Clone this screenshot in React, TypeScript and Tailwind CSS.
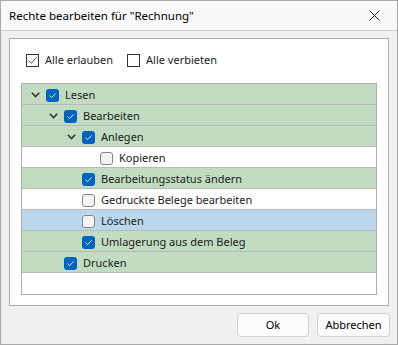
import React from 'react';

interface TreeRow {
  label: string;
  level: number;
  expanded?: boolean;
  checked: boolean;
  tone: 'green' | 'white' | 'blue';
}

const rows: TreeRow[] = [
  { label: 'Lesen', level: 0, expanded: true, checked: true, tone: 'green' },
  { label: 'Bearbeiten', level: 1, expanded: true, checked: true, tone: 'green' },
  { label: 'Anlegen', level: 2, expanded: true, checked: true, tone: 'green' },
  { label: 'Kopieren', level: 3, checked: false, tone: 'white' },
  { label: 'Bearbeitungsstatus ändern', level: 2, checked: true, tone: 'green' },
  { label: 'Gedruckte Belege bearbeiten', level: 2, checked: false, tone: 'white' },
  { label: 'Löschen', level: 2, checked: false, tone: 'blue' },
  { label: 'Umlagerung aus dem Beleg', level: 2, checked: true, tone: 'green' },
  { label: 'Drucken', level: 1, checked: true, tone: 'green' },
];

const toneClass = {
  green: 'bg-[#c1dcc1]',
  white: 'bg-white',
  blue: 'bg-[#bcd6eb]',
};

const Chevron = () => (
  <svg width="9" height="6" viewBox="0 0 9 6" className="ml-[3px]">
    <path d="M0.8 0.8 L4.5 4.6 L8.2 0.8" fill="none" stroke="#333" strokeWidth="1.5" />
  </svg>
);

const TreeCheck = ({ checked }: { checked: boolean }) =>
  checked ? (
    <span className="flex h-[13px] w-[13px] shrink-0 items-center justify-center rounded-[3px] bg-[#0063c0]">
      <svg width="9" height="7" viewBox="0 0 9 7">
        <path d="M1.5 3.6 L3.6 5.6 L7.6 1.4" fill="none" stroke="#fff" strokeWidth="0.9" />
      </svg>
    </span>
  ) : (
    <span className="h-[13px] w-[13px] shrink-0 rounded-[3px] border border-[#858585] bg-[#f4f4f4]" />
  );

const ClassicCheck = ({ checked }: { checked: boolean }) => (
  <span className="flex h-[13px] w-[13px] shrink-0 items-center justify-center border border-[#333] bg-white">
    {checked && (
      <svg width="11" height="11" viewBox="0 0 11 11">
        <path d="M1.5 5.5 L4.3 8.3 L9.6 2.2" fill="none" stroke="#444" strokeWidth="0.9" />
      </svg>
    )}
  </span>
);

export default function App() {
  return (
    <div
      className="flex h-[345px] w-[398px] flex-col border border-[#a9a9a9] bg-[#f0f0f0] text-[11px] text-[#1b1b1b]"
      style={{ fontFamily: '"Segoe UI", "Noto Sans", sans-serif' }}
    >
      {/* Title bar */}
      <div className="flex h-[30px] shrink-0 items-center justify-between border-b border-[#cfcfcf] bg-[#f9f9f9] pl-[8px] pr-[17px]">
        <span className="text-[11.5px] text-black">Rechte bearbeiten für "Rechnung"</span>
        <svg width="11" height="11" viewBox="0 0 11 11">
          <path d="M0.5 0.5 L10.5 10.5 M10.5 0.5 L0.5 10.5" stroke="#222" strokeWidth="1" />
        </svg>
      </div>

      {/* Content panel */}
      <div className="mx-[8px] mt-[7px] flex h-[268px] flex-col border border-[#adadad] bg-white px-[11px] pb-[10px] pt-[15px]">
        <div className="flex h-[13px] items-center pl-[5px]">
          <ClassicCheck checked />
          <span className="ml-[6px]">Alle erlauben</span>
          <span className="ml-[14px]">
            <ClassicCheck checked={false} />
          </span>
          <span className="ml-[6px]">Alle verbieten</span>
        </div>

        <div className="mt-[16px] h-[212px] border border-[#adadad] bg-white">
          {rows.map((row) => (
            <div
              key={row.label}
              className={`flex h-[21px] items-center border-b border-[#b9b9b9] pt-[2px] ${toneClass[row.tone]}`}
            >
              <div className="shrink-0" style={{ width: 6 + row.level * 18 }} />
              <div className="flex w-[18px] shrink-0 items-center">{row.expanded && <Chevron />}</div>
              <TreeCheck checked={row.checked} />
              <span className="ml-[6px] whitespace-nowrap">{row.label}</span>
            </div>
          ))}
        </div>
      </div>

      {/* Buttons */}
      <div className="mt-[7px] flex justify-end gap-[8px] pr-[7px]">
        <button className="h-[24px] w-[72px] rounded-[4px] border border-[#d0d0d0] bg-[#fcfcfc] text-[11px] text-black">
          Ok
        </button>
        <button className="h-[24px] w-[73px] rounded-[4px] border border-[#d0d0d0] bg-[#fcfcfc] text-[11px] text-black">
          Abbrechen
        </button>
      </div>
    </div>
  );
}
